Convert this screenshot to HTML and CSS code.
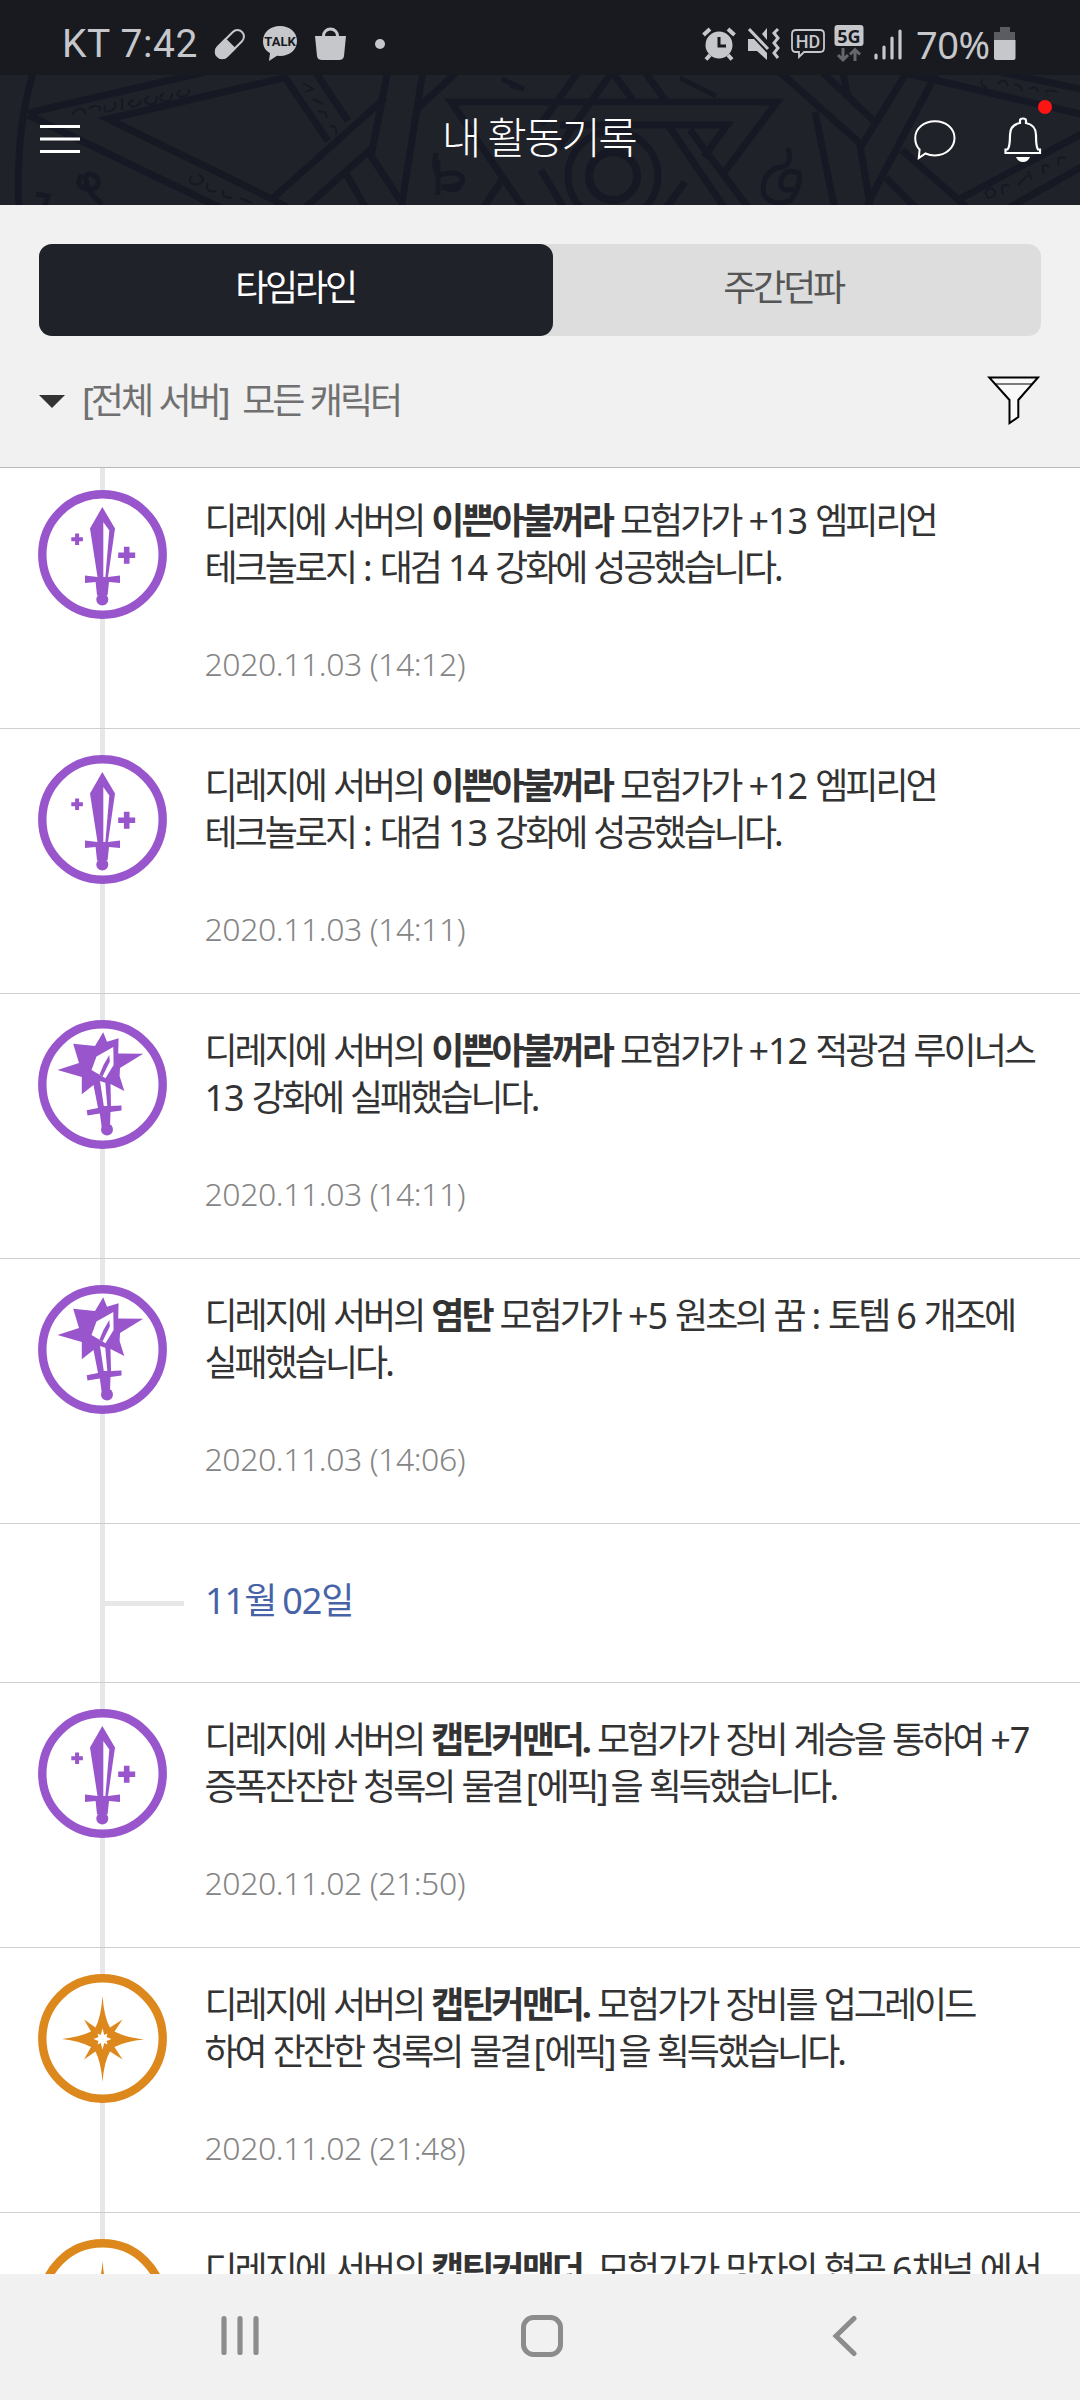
FILE: index.html
```html
<!DOCTYPE html>
<html lang="ko">
<head>
<meta charset="utf-8">
<title>내 활동기록</title>
<link rel="stylesheet" href="styles.css">
</head>
<body>
<svg class="defs" aria-hidden="true">
  <symbol id="sword" viewBox="0 0 129 129">
    <circle cx="64.5" cy="64.5" r="60.2" fill="#fff" stroke="currentColor" stroke-width="8.4"/>
    <path fill="currentColor" d="M64.3 17 77 38.5 70 87 82 85.500v7.500l-11-1-1.400 13h-10.600l-1.400-13-10.600 1v-7.500L59.500 87 52 38.500z"/>
    <circle cx="64.300" cy="109.500" r="6" fill="currentColor"/>
    <path fill="#fff" d="M65.300 32 71.300 40.500 67.400 87H65.300z"/>
    <path stroke="currentColor" stroke-width="4" d="M33.300 49.300h11.600M39.100 43.500v11.600"/>
    <path stroke="currentColor" stroke-width="5.600" d="M80.200 65.300h17M88.700 56.800v17"/>
  </symbol>
  <symbol id="broken" viewBox="0 0 129 129">
    <circle cx="64.500" cy="64.500" r="60.200" fill="#fff" stroke="currentColor" stroke-width="8.400"/>
    <path fill="currentColor" d="M65.200 12.300 69 21.700 80.600 18.300 80.200 33.500 105.200 33.700 82 48 81.600 56 86.300 71 72.500 64 73 86 83.500 85.500V90.500L72.500 92 72 107H63.700L61.800 93.500 49.500 95.500 48.700 90.300 60 88 55.500 65 43.800 74.300V57L19.500 50 41 43 35.200 23.700 57 26z"/>
    <circle cx="69" cy="109.500" r="6" fill="currentColor"/>
    <path fill="#fff" d="M75.300 27 58.500 36.500 53.500 50 67.500 58.300 75.600 45z"/>
    <path fill="currentColor" d="M71.300 35 71.800 41.500 64.500 56.500 61.500 54.500 65.500 45z"/>
    <path fill="#fff" d="M62 61 67.300 62.700 69.300 86H65.800z"/>
  </symbol>
  <symbol id="spark" viewBox="0 0 129 129">
    <circle cx="64.500" cy="64.500" r="60.200" fill="#fff" stroke="currentColor" stroke-width="8.400"/>
    <path fill="currentColor" d="M64.500 22Q66 43 72 53.500L84.500 45.500 76.500 57.500Q88 63.500 106 65.500 88 67 76.500 73L84.500 85.500 72 77.500Q66 88 64.500 108 63 88 57.500 77.500L46 85.500 53 73Q42 67 24 65 42 63 53 57.500L46 45.500 57.500 53.500Q63 43 64.500 22z"/>
    <path fill="#fff" d="M64.500 54.500 66.300 61 69.500 59.500 68.500 63 73.500 65 68.500 67 69.500 70.500 66.300 69 64.500 75.500 62.700 69 59.500 70.500 60.500 67 55.500 65 60.500 63 59.500 59.500 62.700 61z"/>
  </symbol>
</svg>

<div class="status">
  <span class="carrier">KT 7:42</span>
  <svg class="pill" width="32" height="34" viewBox="0 0 32 34"><g transform="rotate(45 16 17)"><rect x="9.500" y="0" width="13" height="34" rx="6.500" fill="none" stroke="#c6c7cb" stroke-width="2"/><path fill="#c6c7cb" d="M8.500 16h15v12a7.500 7.500 0 0 1-15 0z"/></g></svg>
  <svg class="talk" width="36" height="36" viewBox="0 0 36 36"><path fill="#c6c7cb" d="M18 0c10 0 17 6.500 17 15s-7 15-17 15l-3-.2L7 35l1-8C3 24.500 1 20 1 15 1 6.500 8 0 18 0z"/><text x="18" y="20" class="talk-text">TALK</text></svg>
  <svg class="bag" width="32" height="34" viewBox="0 0 32 34"><path fill="#c6c7cb" d="M0 9h31l-2 20q-.5 4-5 4H7q-4.500 0-5-4z"/><path fill="none" stroke="#c6c7cb" stroke-width="3" d="M8.500 10V9a7 7 0 0 1 14 0v1"/></svg>
  <span class="more"></span>
  <svg class="alarm" width="34" height="34" viewBox="0 0 34 34"><circle cx="17" cy="18" r="13.500" fill="#c6c7cb"/><path fill="none" stroke="#c6c7cb" stroke-width="4" d="M1.500 8 8 2M32.500 8 26 2M8 28l-4 4.500M26 28l4 4.500"/><path fill="none" stroke="#181a1f" stroke-width="3" d="M17 10v9h7"/></svg>
  <svg class="mute" width="32" height="34" viewBox="0 0 32 34"><path fill="#c6c7cb" d="M0 12h6l13 14v7l-10-9H0zM19 1v12l-5-6z"/><path fill="none" stroke="#c6c7cb" stroke-width="3" d="M1 2 20 22M30 2l-4 4 4 5-4 5 4 5-4 5 4 5"/></svg>
  <svg class="hd" width="34" height="30" viewBox="0 0 34 30"><path fill="none" stroke="#c6c7cb" stroke-width="1.800" d="M5 1h24q4 0 4 4v14q0 4-4 4H13l-5 5v-5H5q-4 0-4-4V5q0-4 4-4z"/><text x="17" y="19" class="hd-text">HD</text></svg>
  <svg class="fiveg" width="30" height="38" viewBox="0 0 30 38"><rect x=".5" y="0" width="29" height="21" rx="3" fill="#c6c7cb"/><text x="15" y="17.500" class="fiveg-text">5G</text><path fill="none" stroke="#65676c" stroke-width="3" d="M9 23v12M4 30l5 5 5-5M21 36V25M16 29.500l5-5 5 5"/></svg>
  <svg class="signal" width="28" height="32" viewBox="0 0 28 32"><path stroke="#c6c7cb" stroke-width="3.200" stroke-linecap="round" d="M2 27v3M10 19v11M18 10v20M26 3v27"/></svg>
  <span class="percent">70%</span>
  <svg class="battery" width="22" height="34" viewBox="0 0 22 34"><path fill="#5a5c61" d="M6 0h10v5h5v9H0V5h6z"/><path fill="#c6c7cb" d="M0 13h21.500v18q0 2-2 2H2q-2 0-2-2z"/></svg>
</div>

<header class="header">
  <svg class="pattern" width="1080" height="130" viewBox="0 75 1080 130" fill="none" stroke="#161923" stroke-width="7">
    <path d="M34 70Q15 130 19 210M28 113 205 72M283 78 108 119 272 199 290 209M28 115 225 210M280 70 328 141M314 70 348 121M272 199 385 98M304 209 372 148M388 70 371 156 400 200M423 70 401 210M345 172 367 210M456 73 418 108"/>
    <path d="M525 210 451 102H777L722 175M503 178 482 210M578 72 541 124M612 72 558 148M560 125H727L704 157M612 72 633 100M645 72 665 100M668 125 726 210M690 130 750 210M685 182 666 208M541 170 563 207"/>
    <circle cx="613" cy="176" r="45"/><circle cx="613" cy="176" r="24" stroke-width="8"/>
    <path d="M780 72 862 145 907 72M822 72 875 122M843 72 848 98M937 72 867 205M815 112 835 210M860 145 870 205M902 150 970 210M886 178 918 210M905 73 1085 115M1000 72 1085 90M958 200 1085 132M1005 210 1085 165"/>
    <path stroke-width="5" d="M436 153q-4 20 4 22 17-5 22 2 4 10-20 10 18 7 18-4M438 160v35M788 148q6 20-12 20-16 9-12 27 10 13 27 5 10-14 8-27-15-6-18 8-2 12 13 8M680 78l36 18M510 85l14 4-22-10M82 175q-8 10 4 14 14 2 12-10-8-8-12-3-2 14 16 28M36 194l12 2-4 12"/>
    <path stroke-width="2" d="M72 115q5-8 10-6t2 5M89 109q3-4 8-3t2 5M105 105q-2 8 5 6t5-9M122 98v12M133 100q-8 4 0 7 8-2 8-7M149 96q-8 6 0 8t8-8M164 93q-8 6 0 8t8-8M180 90q-6 6 2 7 10-3 6-8M303 83l10 6-8 3M313 99l10 5M318 112q10-2 8 6M330 126q8 0 6 8M191 176q-4 10 8 8 8-5 0-9M208 183q-4 10 8 8M224 190q-4 8 8 8M240 198l12 5M982 79q-2 8 5 8M998 84q7-8 10 2M1014 85q7-2 8 6M1029 89q8-4 9 3M1045 92q6-3 12 0M988 198q-6-8 4-10 8 8-4 10M1003 194q-4-12 7-8M1018 185l10-10M1032 180l-4-9M1044 174q-4-13 6-7M1059 165q-3-10 7-7"/>
  </svg>
  <svg class="menu" width="40" height="29" viewBox="0 0 40 29"><path stroke="#fff" stroke-width="3" d="M0 1.500h40M0 14h40M0 26.500h40"/></svg>
  <h1 class="title">내 활동기록</h1>
  <svg class="chat" width="42" height="40" viewBox="0 0 42 40"><path fill="none" stroke="#fff" stroke-width="2" d="M21 1.200C32 1.200 40.500 8.500 40.500 18S32 35.500 21 35.500q-5 0-9.500-2L4.800 38l.8-8.500C2.500 26.500 1.200 22.500 1.200 18 1.200 8.500 10 1.200 21 1.200z"/></svg>
  <span class="bell">
    <svg width="38" height="46" viewBox="0 0 38 46"><path fill="none" stroke="#fff" stroke-width="2.200" d="M16 6V3.500q0-2 3-2t3 2V6q10 2 10 12 0 12 2 14.500h2V36H1.500v-3.500h2Q6 30 6 18 6 8 16 6z"/><path fill="#fff" d="M12 40h14q-2 5-7 5t-7-5z"/></svg>
    <span class="badge"></span>
  </span>
</header>

<section class="controls">
  <div class="tabs">
    <div class="tab active">타임라인</div>
    <div class="tab">주간던파</div>
  </div>
  <div class="filter">
    <span class="caret"></span>
    <span class="filter-label">[전체 서버]&nbsp; 모든 캐릭터</span>
    <svg class="funnel" width="54" height="50" viewBox="0 0 54 50"><path fill="#f9f9f9" stroke="#000" stroke-width="2" d="M2.200 1.500H51L31.300 24v17L22.500 47V24z"/><path stroke="#000" stroke-width="1.200" d="M8 8h37"/></svg>
  </div>
</section>

<main class="timeline">
  <article class="item">
    <svg class="icon purple"><use href="#sword"/></svg>
    <div class="body"><p class="msg">디레지에 서버의 <b>이쁜아불꺼라</b> 모험가가 <i>+13</i> 엠피리언<br>테크놀로지 <i>:</i> 대검 <i>14</i> 강화에 성공했습니다.</p><time>2020.11.03 (14:12)</time></div>
  </article>
  <article class="item">
    <svg class="icon purple"><use href="#sword"/></svg>
    <div class="body"><p class="msg">디레지에 서버의 <b>이쁜아불꺼라</b> 모험가가 <i>+12</i> 엠피리언<br>테크놀로지 <i>:</i> 대검 <i>13</i> 강화에 성공했습니다.</p><time>2020.11.03 (14:11)</time></div>
  </article>
  <article class="item">
    <svg class="icon purple"><use href="#broken"/></svg>
    <div class="body"><p class="msg">디레지에 서버의 <b>이쁜아불꺼라</b> 모험가가 <i>+12</i> 적광검 루이너스<br><i>13</i> 강화에 실패했습니다.</p><time>2020.11.03 (14:11)</time></div>
  </article>
  <article class="item">
    <svg class="icon purple"><use href="#broken"/></svg>
    <div class="body"><p class="msg">디레지에 서버의 <b>염탄</b> 모험가가 <i>+5</i> 원초의 꿈 <i>:</i> 토템 <i>6</i> 개조에<br>실패했습니다.</p><time>2020.11.03 (14:06)</time></div>
  </article>
  <div class="day"><span class="branch"></span><h2><i>11</i>월 <i>02</i>일</h2></div>
  <article class="item">
    <svg class="icon purple"><use href="#sword"/></svg>
    <div class="body"><p class="msg">디레지에 서버의 <b>캡틴커맨더.</b> 모험가가 장비 계승을 통하여 <i>+7</i><br>증폭잔잔한 청록의 물결<span class="grade"><i>[</i>에픽<i>]</i></span>을 획득했습니다.</p><time>2020.11.02 (21:50)</time></div>
  </article>
  <article class="item">
    <svg class="icon orange"><use href="#spark"/></svg>
    <div class="body"><p class="msg">디레지에 서버의 <b>캡틴커맨더.</b> 모험가가 장비를 업그레이드<br>하여 잔잔한 청록의 물결<span class="grade"><i>[</i>에픽<i>]</i></span>을 획득했습니다.</p><time>2020.11.02 (21:48)</time></div>
  </article>
  <article class="item">
    <svg class="icon orange"><use href="#spark"/></svg>
    <div class="body"><p class="msg">디레지에 서버의 <b>캡틴커맨더.</b> 모험가가 망자의 협곡 <i>6</i>채널 에서</p></div>
  </article>
</main>

<nav class="nav">
  <svg width="42" height="42" viewBox="0 0 42 42"><path stroke="#8c8c8c" stroke-width="5.200" stroke-linecap="round" d="M5 3.500v34M21 3.500v34M37 3.500v34"/></svg>
  <svg width="42" height="42" viewBox="0 0 42 42"><rect x="2.500" y="2.500" width="37" height="37" rx="10" fill="none" stroke="#8c8c8c" stroke-width="5"/></svg>
  <svg width="42" height="42" viewBox="0 0 42 42"><path fill="none" stroke="#8c8c8c" stroke-width="5" stroke-linecap="round" d="M31 3.500 13 21 31 38.500"/></svg>
</nav>
</body>
</html>
```
FILE: styles.css
```css
* { box-sizing: border-box; margin: 0; padding: 0; }
body {
  width: 1080px;
  height: 2400px;
  overflow: hidden;
  display: flex;
  flex-direction: column;
  background: #fff;
  color: #333;
  font-family: "Noto Sans", "Noto Sans CJK KR", sans-serif;
}
svg { display: block; flex: none; }
i { font-style: normal; letter-spacing: -1px; }
.defs { position: absolute; width: 0; height: 0; }

.status {
  height: 75px;
  flex: none;
  display: flex;
  align-items: center;
  padding: 13px 64px 0 62px;
  background: #181a1f;
  color: #c6c7cb;
}
.carrier { width: 152px; font: 39px/40px Roboto, sans-serif; letter-spacing: .6px; white-space: nowrap; }
.talk { margin-left: 16px; }
.talk-text { font: bold 13px Roboto, sans-serif; text-anchor: middle; fill: #181a1f; }
.bag { margin-left: 17px; }
.more { width: 10px; height: 10px; margin-left: 28px; border-radius: 50%; background: #c6c7cb; }
.alarm { margin-left: auto; }
.mute { margin-left: 12px; }
.hd { margin-left: 11px; }
.hd-text { font: 500 18px Roboto, sans-serif; text-anchor: middle; fill: #c6c7cb; }
.fiveg { margin-left: 9px; }
.fiveg-text { font: bold 18px "Noto Sans", sans-serif; text-anchor: middle; fill: #181a1f; }
.signal { margin-left: 10px; }
.percent { width: 76px; margin-left: 14px; font: 38px/40px "Noto Sans", sans-serif; letter-spacing: -.5px; }
.battery { margin-left: 2px; }

.header {
  position: relative;
  height: 130px;
  flex: none;
  display: flex;
  align-items: center;
  padding: 0 38px 0 40px;
  background: #1f2229;
  color: #fff;
}
.pattern { position: absolute; inset: 0; }
.menu, .title, .chat, .bell { position: relative; }
.title {
  flex: 1;
  padding-left: 83px;
  margin-bottom: 5px;
  text-align: center;
  font-size: 43px;
  font-weight: 300;
  line-height: 60px;
  letter-spacing: -2.600px;
}
.menu { margin-bottom: 1px; }
.chat { margin-right: 48px; }
.badge {
  position: absolute;
  top: -17px;
  right: -10px;
  width: 14px;
  height: 14px;
  border-radius: 50%;
  background: #ff1414;
}

.controls {
  height: 263px;
  flex: none;
  padding: 39px 39px 0;
  background: #f1f1f1;
  border-bottom: 1px solid #b8b8b8;
}
.tabs { display: flex; height: 92px; border-radius: 13px; background: #ddd; }
.tab {
  width: 514px;
  flex: none;
  padding-right: 2px;
  font-size: 36px;
  line-height: 88px;
  letter-spacing: -3.200px;
  text-align: center;
  color: #555;
}
.tab.active { margin-right: -26px; border-radius: 13px; background: #1f2229; color: #fff; }
.filter { display: flex; align-items: center; height: 130px; }
.caret { border: 13px solid transparent; border-top-color: #333; border-bottom: 0; }
.filter-label { flex: 1; margin-left: 17px; font-size: 36px; letter-spacing: -3px; word-spacing: 1px; color: #707070; line-height: 50px; }

.timeline { position: relative; flex: 1; min-height: 0; overflow: hidden; margin-top: -4px; clip-path: inset(4px 0 0); }
.timeline::before { content: ""; position: absolute; top: 0; bottom: 0; left: 100px; width: 5px; background: #e7e7e7; }
.item {
  position: relative;
  display: flex;
  height: 265px;
  padding: 26px 0 0 38px;
  border-bottom: 1px solid #cfcfcf;
}
.icon { width: 129px; height: 129px; }
.purple { color: #9955cb; }
.orange { color: #dd881d; }
.body { padding: 7px 0 0 37.5px; white-space: nowrap; }
.msg { font-size: 36px; line-height: 47.3px; letter-spacing: -3px; word-spacing: 1.600px; }
.grade { margin: 0 3px 0 4px; }
time { display: block; margin-top: 48px; font-size: 32px; font-weight: 350; line-height: 48px; letter-spacing: -.450px; color: #858585; }
.day {
  position: relative;
  display: flex;
  align-items: center;
  height: 159px;
  padding-left: 105px;
  border-bottom: 1px solid #cfcfcf;
}
.branch { width: 79px; height: 5px; background: #e7e7e7; }
.day h2 { margin: 0 0 9px 21px; font-size: 36px; font-weight: 400; letter-spacing: -3px; word-spacing: 1.500px; color: #4763a8; }

.nav {
  height: 126px;
  flex: none;
  display: flex;
  justify-content: center;
  gap: 260px;
  padding: 0 0 2px 4px;
  align-items: center;
  background: #f1f1f1;
}
```
